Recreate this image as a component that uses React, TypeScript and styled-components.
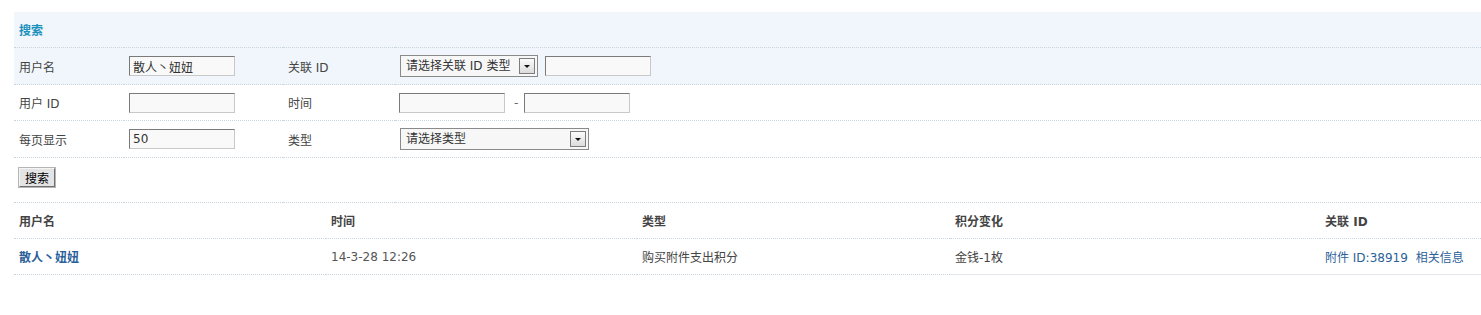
import styled, { createGlobalStyle } from 'styled-components';

const GlobalStyle = createGlobalStyle`
  body {
    margin: 0;
    background: #fff;
    font-family: "DejaVu Sans", "Noto Sans CJK SC", sans-serif;
    font-size: 12px;
    color: #444;
  }
`;

const Page = styled.div`
  padding: 12px 0 0 14px;
`;

const Table = styled.table`
  width: 100%;
  border-collapse: collapse;
  table-layout: fixed;
`;

const Row = styled.tr<{ $hl?: boolean }>`
  background: ${p => (p.$hl ? '#f0f6fb' : 'transparent')};
`;

const Cell = styled.td<{ $h?: number; $solid?: boolean }>`
  height: ${p => p.$h ?? 36}px;
  padding: 0 5px;
  border-bottom: 1px ${p => (p.$solid ? 'solid #e2e6ea' : 'dotted #c9d6e0')};
  vertical-align: middle;
  white-space: nowrap;
`;

const ActionCell = styled(Cell)`
  vertical-align: top;
  padding-top: 10px;
  box-sizing: border-box;
`;

const Caption = styled.th`
  height: 35px;
  padding: 0 5px;
  text-align: left;
  font-weight: bold;
  color: #1a90bd;
  border-bottom: 1px dotted #c9d6e0;
`;

const HeadCell = styled.th`
  height: 35px;
  padding: 0 5px;
  text-align: left;
  font-weight: bold;
  color: #444;
  border-bottom: 1px dotted #c9d6e0;
`;

const TextInput = styled.input<{ $w?: number }>`
  box-sizing: border-box;
  width: ${p => p.$w ?? 106}px;
  height: 20px;
  padding: 1px 3px;
  font: inherit;
  color: #333;
  background: #f9f9f9;
  border: 1px solid;
  border-color: #7a7a7a #c8c8c8 #c8c8c8 #7a7a7a;
  outline: none;
`;

const Dash = styled.span`
  display: inline-block;
  margin: 0 6px 0 9px;
  color: #666;
`;

const SelectBox = styled.label<{ $w: number }>`
  box-sizing: border-box;
  display: inline-flex;
  align-items: center;
  width: ${p => p.$w}px;
  height: 22px;
  padding: 0 2px 0 0;
  border: 1px solid #8a8a8a;
  background: #f7f7f7;
  vertical-align: middle;
`;

const NativeSelect = styled.select`
  flex: 1;
  min-width: 0;
  appearance: none;
  border: none;
  background: transparent;
  font: inherit;
  color: #333;
  padding: 0 0 0 5px;
  height: 20px;
  outline: none;
`;

const Arrow = styled.span`
  box-sizing: border-box;
  flex: none;
  width: 16px;
  height: 16px;
  border: 1px solid #7d7d7d;
  background: linear-gradient(#fbfbfb, #dcdcdc);
  display: flex;
  align-items: center;
  justify-content: center;
  &::after {
    content: '';
    border-left: 3px solid transparent;
    border-right: 3px solid transparent;
    border-top: 3px solid #111;
    margin-top: 1px;
  }
`;

const Gap = styled.span`
  display: inline-block;
  width: 7px;
`;

const Button = styled.button`
  display: block;
  height: 19px;
  padding: 0 5px;
  margin-left: 0;
  font-family: "Noto Sans CJK SC", sans-serif;
  font-size: 12px;
  color: #000;
  background: #e4e4e4;
  border: 1px solid;
  border-color: #f4f4f4 #6f6f6f #6f6f6f #f4f4f4;
  box-shadow: 0 0 0 1px #b5b5b5;
  line-height: 15px;
`;

const Link = styled.a<{ $bold?: boolean }>`
  color: #2b5f99;
  font-weight: ${p => (p.$bold ? 'bold' : 'normal')};
  text-decoration: none;
  margin-right: ${p => (p.$bold ? 0 : 8)}px;
`;

const Muted = styled.span`
  color: #555;
`;

function Select({ width, label }: { width: number; label: string }) {
  return (
    <SelectBox $w={width}>
      <NativeSelect defaultValue="">
        <option value="">{label}</option>
      </NativeSelect>
      <Arrow />
    </SelectBox>
  );
}

export default function App() {
  return (
    <Page>
      <GlobalStyle />
      <Table>
        <colgroup>
          <col style={{ width: 110 }} />
          <col style={{ width: 159 }} />
          <col style={{ width: 112 }} />
          <col />
        </colgroup>
        <thead>
          <Row $hl>
            <Caption colSpan={4}>搜索</Caption>
          </Row>
        </thead>
        <tbody>
          <Row $hl>
            <Cell>用户名</Cell>
            <Cell><TextInput defaultValue="散人丶妞妞" /></Cell>
            <Cell>关联 ID</Cell>
            <Cell>
              <Select width={138} label="请选择关联 ID 类型" />
              <Gap />
              <TextInput />
            </Cell>
          </Row>
          <Row>
            <Cell $h={35}>用户 ID</Cell>
            <Cell $h={35}><TextInput /></Cell>
            <Cell $h={35}>时间</Cell>
            <Cell $h={35}>
              <TextInput style={{ marginLeft: -1 }} />
              <Dash>-</Dash>
              <TextInput />
            </Cell>
          </Row>
          <Row>
            <Cell>每页显示</Cell>
            <Cell><TextInput defaultValue="50" /></Cell>
            <Cell>类型</Cell>
            <Cell><Select width={189} label="请选择类型" /></Cell>
          </Row>
          <Row>
            <ActionCell $h={45} colSpan={4}><Button>搜索</Button></ActionCell>
          </Row>
        </tbody>
      </Table>
      <Table>
        <colgroup>
          <col style={{ width: 312 }} />
          <col style={{ width: 311 }} />
          <col style={{ width: 313 }} />
          <col style={{ width: 370 }} />
          <col />
        </colgroup>
        <thead>
          <tr>
            <HeadCell>用户名</HeadCell>
            <HeadCell>时间</HeadCell>
            <HeadCell>类型</HeadCell>
            <HeadCell>积分变化</HeadCell>
            <HeadCell>关联 ID</HeadCell>
          </tr>
        </thead>
        <tbody>
          <tr>
            <Cell $h={35}><Link href="#" $bold>散人丶妞妞</Link></Cell>
            <Cell $h={35}><Muted>14-3-28 12:26</Muted></Cell>
            <Cell $h={35}>购买附件支出积分</Cell>
            <Cell $h={35} $solid>金钱-1枚</Cell>
            <Cell $h={35} $solid>
              <Link href="#">附件 ID:38919</Link>
              <Link href="#" style={{ marginRight: 0 }}>相关信息</Link>
            </Cell>
          </tr>
        </tbody>
      </Table>
    </Page>
  );
}
